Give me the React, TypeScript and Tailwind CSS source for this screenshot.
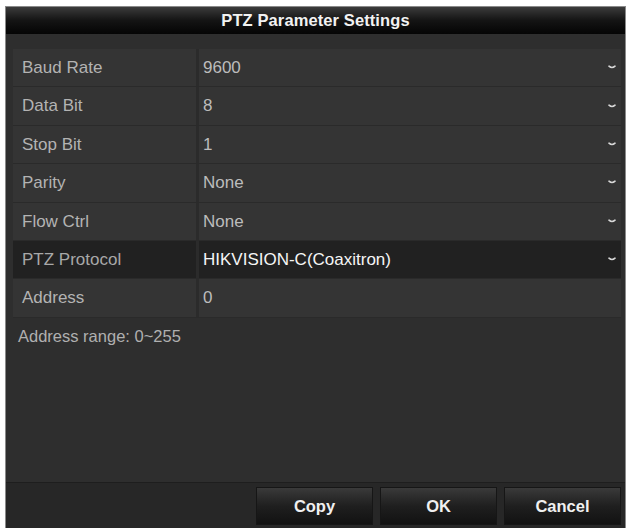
import React from 'react';

const rows = [
    { label: 'Baud Rate', value: '9600' },
    { label: 'Data Bit', value: '8' },
    { label: 'Stop Bit', value: '1' },
    { label: 'Parity', value: 'None' },
    { label: 'Flow Ctrl', value: 'None' },
    { label: 'PTZ Protocol', value: 'HIKVISION-C(Coaxitron)', active: true },
    { label: 'Address', value: '0', noArrow: true },
];

const Chevron = () => (
    <svg width="8" height="5" viewBox="0 0 8 5" className="shrink-0">
        <path d="M1 1.2 Q4 3.8 7 1.2" stroke="#d8d8d8" strokeWidth="1.6" fill="none" strokeLinecap="round" />
    </svg>
);

const App = () => {
    return (
        <div
            className="w-[629px] h-[528px] overflow-hidden bg-white pt-[6px] pl-[5px] pr-[3px]"
            style={{ fontFamily: '"Liberation Sans", Arial, sans-serif' }}
        >
            <div className="h-[528px] bg-[#2e2e2e] border-l border-t border-r border-[#8a8a8a] flex flex-col">
                {/* Title bar */}
                <div className="h-[27px] shrink-0 bg-gradient-to-b from-[#3c3c3c] via-[#141414] to-[#050505] flex items-center justify-center">
                    <span className="text-[16.5px] font-bold text-[#f2f2f2] tracking-[0.1px]">PTZ Parameter Settings</span>
                </div>

                {/* Parameter rows */}
                <div className="mt-[15px] ml-[7px] mr-[4px] flex flex-col bg-[#2b2b2b]">
                    {rows.map((r) => (
                        <div key={r.label} className="h-[38.4px] flex gap-[3px] border-b border-[#2a2a2a]">
                            <div
                                className={`w-[183px] shrink-0 flex items-center pl-[9px] text-[17px] ${
                                    r.active ? 'bg-[#212121] text-[#a8a8a8]' : 'bg-[#343434] text-[#b3b3b3]'
                                }`}
                            >
                                {r.label}
                            </div>
                            <div
                                className={`flex-1 flex items-center justify-between pl-[4px] pr-[5px] text-[17px] ${
                                    r.active ? 'bg-[#212121] text-[#f5f5f5]' : 'bg-[#343434] text-[#bcbcbc]'
                                }`}
                            >
                                <span>{r.value}</span>
                                {!r.noArrow && <Chevron />}
                            </div>
                        </div>
                    ))}
                </div>

                <div className="ml-[12px] mt-[6px] text-[16.5px] text-[#b0b0b0]">Address range: 0~255</div>

                {/* Bottom bar */}
                <div className="mt-auto h-[52px] shrink-0 bg-[#272727] border-t border-[#1e1e1e] flex items-start justify-end gap-[7px] pt-[4px] pr-[4px] pl-[9px]">
                    {['Copy', 'OK', 'Cancel'].map((b) => (
                        <button
                            key={b}
                            className="w-[117px] h-[38px] bg-gradient-to-b from-[#3a3a3a] via-[#1f1f1f] to-[#121212] border border-[#161616] text-[16.5px] font-bold text-[#f0f0f0]"
                        >
                            {b}
                        </button>
                    ))}
                </div>
            </div>
        </div>
    );
};

export default App;
